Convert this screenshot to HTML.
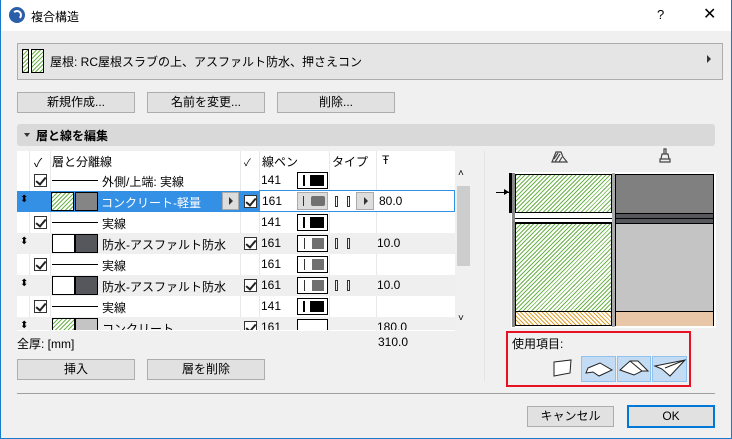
<!DOCTYPE html><html><head><meta charset="utf-8"><style>
*{box-sizing:border-box;margin:0;padding:0}
body{width:732px;height:439px;overflow:hidden;background:#f0f0f0;font-family:"Liberation Sans","Noto Sans CJK JP",sans-serif;font-size:12px;color:#000;position:relative}
.a{position:absolute}
.btn{position:absolute;background:#e1e1e1;border:1px solid #adadad;text-align:center;line-height:19px;font-size:12px}
.row{position:absolute;left:17px;width:438px;height:21px}
.cb{position:absolute;width:13px;height:13px;border:1px solid #333;background:#fff}
.cb:after{content:"";position:absolute;left:3px;top:0px;width:4px;height:8px;border:solid #222;border-width:0 2px 2px 0;transform:rotate(40deg)}
.t{position:absolute;top:3px;white-space:nowrap}
.sw{position:absolute;top:2px;left:280px;width:31px;height:17px;border:1px solid #000;background:#fff}
.hatch{background:repeating-linear-gradient(135deg,#6cb34a 0 1px,#fff 1px 3px)}
</style></head><body>
<div class="a" style="left:0;top:0;width:732px;height:439px;border:1px solid #1979ca;border-top:none"></div>
<div class="a" style="left:1px;top:0;width:730px;height:31px;background:#fff"></div>
<div class="a" style="left:9px;top:7px;width:16px;height:16px;border-radius:50%;background:#2a5ea8"></div>
<div class="a" style="left:12px;top:10px;width:10px;height:10px;border-radius:50%;border:2px solid #fff;border-left-color:transparent;border-bottom-color:transparent"></div>
<div class="a" style="left:31px;top:8px;font-size:12px">複合構造</div>
<div class="a" style="left:657px;top:7px;font-size:13px">?</div>
<div class="a" style="left:703px;top:4px;font-size:16px">✕</div>

<div class="a" style="left:17px;top:43px;width:706px;height:37px;background:#e5e5e5;border:1px solid #adadad"></div>
<div class="a hatch" style="left:22px;top:49px;width:22px;height:24px;border:1px solid #000"></div>
<div class="a" style="left:28px;top:49px;width:4px;height:24px;border-left:1px solid #000;border-right:1px solid #000;background:#fff"></div>
<div class="a" style="left:50px;top:53px">屋根: RC屋根スラブの上、アスファルト防水、押さえコン</div>
<div class="a" style="left:707px;top:55px;width:0;height:0;border-left:4px solid #333;border-top:4px solid transparent;border-bottom:4px solid transparent"></div>

<div class="btn" style="left:17px;top:92px;width:118px;height:21px">新規作成...</div>
<div class="btn" style="left:147px;top:92px;width:118px;height:21px">名前を変更...</div>
<div class="btn" style="left:277px;top:92px;width:118px;height:21px">削除...</div>

<div class="a" style="left:17px;top:124px;width:698px;height:22px;background:#d9d9d9;border-radius:3px"></div>
<div class="a" style="left:24px;top:133px;border-top:4px solid #333;border-left:3px solid transparent;border-right:3px solid transparent"></div>
<div class="a" style="left:36px;top:127px;font-weight:bold">層と線を編集</div>

<div class="a" style="left:17px;top:151px;width:438px;height:180px;background:#fff"></div>
<div class="a" style="left:29px;top:151px;width:1px;height:180px;background:#e8e8e8"></div>
<div class="a" style="left:50px;top:151px;width:1px;height:180px;background:#e8e8e8"></div>
<div class="a" style="left:240px;top:151px;width:1px;height:180px;background:#e8e8e8"></div>
<div class="a" style="left:259px;top:151px;width:1px;height:180px;background:#e8e8e8"></div>
<div class="a" style="left:329px;top:151px;width:1px;height:180px;background:#e8e8e8"></div>
<div class="a" style="left:376px;top:151px;width:1px;height:180px;background:#e8e8e8"></div>
<div class="a" style="left:34px;top:154px">✓</div>
<div class="a" style="left:52px;top:153px">層と分離線</div>
<div class="a" style="left:244px;top:154px;font-size:10px">✓</div>
<div class="a" style="left:262px;top:153px">線ペン</div>
<div class="a" style="left:332px;top:153px">タイプ</div>
<div class="a" style="left:382px;top:153px">Ŧ</div>

<div class="row" style="top:170px"><div class="cb" style="left:17px;top:4px"></div><div class="a" style="left:35px;top:10px;width:46px;height:1px;background:#000"></div><span class="t" style="left:85px">外側/上端: 実線</span><span class="t" style="left:244px">141</span><div class="sw"><div class="a" style="left:5px;top:2px;width:2px;height:11px;background:#000"></div><div class="a" style="left:12px;top:2px;width:14px;height:11px;background:#000"></div></div></div>
<div class="row" style="top:191px;background:#3390e5;border:1px solid #3390e5"></div>
<div class="a" style="left:259px;top:190px;width:196px;height:22px;background:#fff;border:1px solid #3390e5"></div>
<div class="a" style="left:20px;top:194px;color:#000;font-size:10px">⬍</div>
<div class="a hatch" style="left:51px;top:192px;width:23px;height:19px;border:1px solid #000"></div>
<div class="a" style="left:75px;top:192px;width:23px;height:19px;border:1px solid #000;background:#858585"></div>
<div class="a" style="left:101px;top:194px;color:#fff">コンクリート-軽量</div>
<div class="a" style="left:222px;top:192px;width:17px;height:18px;background:#ddd;border:1px solid #aaa"></div>
<div class="a" style="left:229px;top:197px;border-left:4px solid #333;border-top:4px solid transparent;border-bottom:4px solid transparent"></div>
<div class="cb" style="left:244px;top:195px"></div>
<div class="a" style="left:262px;top:194px">161</div>
<div class="a" style="left:297px;top:192px;width:31px;height:18px;background:#ddd;border:1px solid #aaa"><div class="a" style="left:5px;top:3px;width:1px;height:10px;background:#333"></div><div class="a" style="left:13px;top:3px;width:14px;height:10px;background:#707070;border-radius:2px"></div></div>
<div class="a" style="left:335px;top:196px;width:3px;height:11px;border:1px solid #333"></div>
<div class="a" style="left:347px;top:196px;width:3px;height:11px;border:1px solid #333"></div>
<div class="a" style="left:356px;top:192px;width:18px;height:18px;background:#ddd;border:1px solid #aaa"></div>
<div class="a" style="left:364px;top:197px;border-left:4px solid #333;border-top:4px solid transparent;border-bottom:4px solid transparent"></div>
<div class="a" style="left:379px;top:194px">80.0</div>

<div class="row" style="top:212px"><div class="cb" style="left:17px;top:4px"></div><div class="a" style="left:35px;top:10px;width:46px;height:1px;background:#000"></div><span class="t" style="left:85px">実線</span><span class="t" style="left:244px">141</span><div class="sw"><div class="a" style="left:5px;top:2px;width:2px;height:11px;background:#000"></div><div class="a" style="left:12px;top:2px;width:14px;height:11px;background:#000"></div></div></div>
<div class="row" style="top:233px;background:#efefef"><span class="t" style="left:3px;font-size:10px">⬍</span><div class="a" style="left:35px;top:1px;width:23px;height:19px;border:1px solid #000;background:#fff"></div><div class="a" style="left:58px;top:1px;width:23px;height:19px;border:1px solid #000;background:#55575c"></div><span class="t" style="left:85px">防水-アスファルト防水</span><div class="cb" style="left:227px;top:4px"></div><span class="t" style="left:244px">161</span><div class="sw"><div class="a" style="left:6px;top:2px;width:1px;height:11px;background:#333"></div><div class="a" style="left:14px;top:2px;width:12px;height:11px;background:#707070"></div></div><div class="a" style="left:318px;top:5px;width:3px;height:11px;border:1px solid #333"></div><div class="a" style="left:330px;top:5px;width:3px;height:11px;border:1px solid #333"></div><span class="t" style="left:360px">10.0</span></div>
<div class="row" style="top:254px"><div class="cb" style="left:17px;top:4px"></div><div class="a" style="left:35px;top:10px;width:46px;height:1px;background:#000"></div><span class="t" style="left:85px">実線</span><span class="t" style="left:244px">161</span><div class="sw"><div class="a" style="left:6px;top:2px;width:1px;height:11px;background:#333"></div><div class="a" style="left:14px;top:2px;width:12px;height:11px;background:#707070"></div></div></div>
<div class="row" style="top:275px;background:#efefef"><span class="t" style="left:3px;font-size:10px">⬍</span><div class="a" style="left:35px;top:1px;width:23px;height:19px;border:1px solid #000;background:#fff"></div><div class="a" style="left:58px;top:1px;width:23px;height:19px;border:1px solid #000;background:#55575c"></div><span class="t" style="left:85px">防水-アスファルト防水</span><div class="cb" style="left:227px;top:4px"></div><span class="t" style="left:244px">161</span><div class="sw"><div class="a" style="left:6px;top:2px;width:1px;height:11px;background:#333"></div><div class="a" style="left:14px;top:2px;width:12px;height:11px;background:#707070"></div></div><div class="a" style="left:318px;top:5px;width:3px;height:11px;border:1px solid #333"></div><div class="a" style="left:330px;top:5px;width:3px;height:11px;border:1px solid #333"></div><span class="t" style="left:360px">10.0</span></div>
<div class="row" style="top:296px"><div class="cb" style="left:17px;top:4px"></div><div class="a" style="left:35px;top:10px;width:46px;height:1px;background:#000"></div><span class="t" style="left:85px">実線</span><span class="t" style="left:244px">141</span><div class="sw"><div class="a" style="left:5px;top:2px;width:2px;height:11px;background:#000"></div><div class="a" style="left:12px;top:2px;width:14px;height:11px;background:#000"></div></div></div>
<div class="row" style="top:317px;height:13px;overflow:hidden;background:#efefef"><span class="t" style="left:3px;font-size:10px">⬍</span><div class="a hatch" style="left:35px;top:1px;width:23px;height:19px;border:1px solid #000"></div><div class="a" style="left:58px;top:1px;width:23px;height:19px;border:1px solid #000;background:#c4c4c4"></div><span class="t" style="left:85px">コンクリート</span><div class="cb" style="left:227px;top:4px"></div><span class="t" style="left:244px">161</span><div class="sw"></div><span class="t" style="left:360px">180.0</span></div>
<div class="a" style="left:455px;top:165px;width:17px;height:166px;background:#f0f0f0"></div>
<div class="a" style="left:458px;top:168px;font-size:10px">˄</div>
<div class="a" style="left:457px;top:186px;width:13px;height:80px;background:#cdcdcd"></div>
<div class="a" style="left:458px;top:313px;font-size:10px">˅</div>

<div class="a" style="left:17px;top:335px">全厚: [mm]</div>
<div class="a" style="left:378px;top:335px">310.0</div>
<div class="btn" style="left:17px;top:359px;width:118px;height:21px">挿入</div>
<div class="btn" style="left:147px;top:359px;width:118px;height:21px">層を削除</div>

<div class="a" style="left:484px;top:151px;width:1px;height:230px;background:#e4e4e4"></div>
<svg class="a" style="left:550px;top:150px" width="20" height="14" viewBox="0 0 20 14" fill="none" stroke="#444" stroke-width="1.2"><path d="M2 12 L6 2 L11 2 L13 7 L17 12 Z M4 9 L8 3 M5 12 L10 4 M9 12 L12 7"/></svg>
<svg class="a" style="left:658px;top:148px" width="14" height="16" viewBox="0 0 14 16" fill="none" stroke="#444" stroke-width="1.2"><path d="M6 1 L8 1 L8 6 L6 6 Z M4 6 L10 6 L11 11 L3 11 Z M2 11 L12 11 L12 14 L2 14 Z"/></svg>
<div class="a" style="left:511px;top:172px;width:205px;height:156px;background:#fff"></div>
<div class="a" style="left:512px;top:173px;width:3px;height:154px;background:#888"></div>
<div class="a" style="left:612px;top:173px;width:3px;height:154px;background:#aaa"></div>
<div class="a hatch" style="left:515px;top:174px;width:97px;height:39px;border:1px solid #000"></div>
<div class="a" style="left:515px;top:212px;width:97px;height:11px;border-top:1px solid #000;border-bottom:1px solid #000;background:#fff"></div>
<div class="a" style="left:515px;top:218px;width:97px;height:1px;background:#000"></div>
<div class="a hatch" style="left:515px;top:223px;width:97px;height:89px;border:1px solid #000"></div>
<div class="a" style="left:515px;top:311px;width:97px;height:15px;border:1px solid #000;background:repeating-linear-gradient(45deg,#e0a030 0 1px,#fff 1px 3px)"></div>
<div class="a" style="left:615px;top:174px;width:99px;height:152px;border:1px solid #000;background:#c4c4c4"></div>
<div class="a" style="left:616px;top:175px;width:97px;height:39px;background:#808080;border-bottom:1px solid #000"></div>
<div class="a" style="left:616px;top:214px;width:97px;height:10px;background:#55575c;border-bottom:1px solid #000"></div>
<div class="a" style="left:616px;top:218px;width:97px;height:1px;background:#000"></div>
<div class="a" style="left:616px;top:311px;width:97px;height:15px;background:#e8c7a8;border-top:1px solid #000"></div>
<div class="a" style="left:509px;top:173px;width:3px;height:40px;background:#000"></div>
<div class="a" style="left:496px;top:192px;width:13px;height:1px;background:#000"></div>
<div class="a" style="left:504px;top:189px;border-left:5px solid #000;border-top:3px solid transparent;border-bottom:3px solid transparent"></div>

<div class="a" style="left:506px;top:331px;width:185px;height:56px;border:2px solid #e81123"></div>
<div class="a" style="left:512px;top:335px">使用項目:</div>
<div class="a" style="left:581px;top:356px;width:35px;height:26px;background:#c3dcf3;border:1px solid #8fc1ee"></div>
<div class="a" style="left:617px;top:356px;width:34px;height:26px;background:#c3dcf3;border:1px solid #8fc1ee"></div>
<div class="a" style="left:652px;top:356px;width:35px;height:26px;background:#c3dcf3;border:1px solid #8fc1ee"></div>
<svg class="a" style="left:550px;top:356px" width="140" height="26" viewBox="0 0 140 26" fill="#fff" stroke="#222" stroke-width="1">
<path d="M4 6 L21 4 L20 17 L4 20 Z"/>
<path d="M38 12 L50 7 L62 14 L49 20 L43 16 L36 17 Z"/>
<path d="M70 14 L80 5 L92 15 L84 19 Z M80 5 L88 5 L98 15 L92 15"/>
<path d="M105 10 L135 4 L120 20 L112 13 Z M115 12 L135 4"/>
</svg>

<div class="a" style="left:17px;top:393px;width:698px;height:1px;background:#a0a0a0"></div>
<div class="btn" style="left:527px;top:406px;width:87px;height:21px">キャンセル</div>
<div class="btn" style="left:627px;top:405px;width:88px;height:23px;border:2px solid #0078d7">OK</div>
</body></html>
